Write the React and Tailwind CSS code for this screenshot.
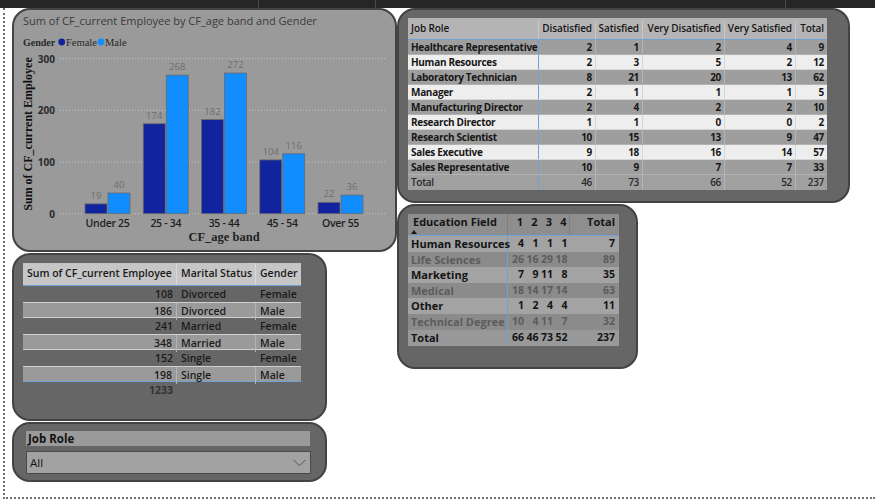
import React from "react";

const ageBands = [
  { label: "Under 25", f: 19, m: 40 },
  { label: "25 - 34", f: 174, m: 268 },
  { label: "35 - 44", f: 182, m: 272 },
  { label: "45 - 54", f: 104, m: 116 },
  { label: "Over 55", f: 22, m: 36 },
];

const jobRoles = [
  ["Healthcare Representative", 2, 1, 2, 4, 9],
  ["Human Resources", 2, 3, 5, 2, 12],
  ["Laboratory Technician", 8, 21, 20, 13, 62],
  ["Manager", 2, 1, 1, 1, 5],
  ["Manufacturing Director", 2, 4, 2, 2, 10],
  ["Research Director", 1, 1, 0, 0, 2],
  ["Research Scientist", 10, 15, 13, 9, 47],
  ["Sales Executive", 9, 18, 16, 14, 57],
  ["Sales Representative", 10, 9, 7, 7, 33],
];

const eduFields = [
  ["Human Resources", 4, 1, 1, 1, 7],
  ["Life Sciences", 26, 16, 29, 18, 89],
  ["Marketing", 7, 9, 11, 8, 35],
  ["Medical", 18, 14, 17, 14, 63],
  ["Other", 1, 2, 4, 4, 11],
  ["Technical Degree", 10, 4, 11, 7, 32],
];

const marital = [
  [108, "Divorced", "Female"],
  [186, "Divorced", "Male"],
  [241, "Married", "Female"],
  [348, "Married", "Male"],
  [152, "Single", "Female"],
  [198, "Single", "Male"],
];

const BASE = 181.7;
const SCALE = 0.517;

function AgeChart() {
  return (
    <div className="w-[385px] h-[244px] bg-[#9a9a9a] border-2 border-[#434343] rounded-[18px] overflow-hidden">
      <div className="h-[22px] pl-[9px] pt-[4px] text-[11px] leading-[14px] text-[#3a3a3a]">
        Sum of CF_current Employee by CF_age band and Gender
      </div>
      <svg width="381" height="218" className="block">
        {/* legend */}
        <text x="9" y="13.5" fontFamily="'Liberation Serif', serif" fontWeight="700" fontSize="10" fill="#2a2a2a">Gender</text>
        <circle cx="47.7" cy="10" r="3.4" fill="#12239e" />
        <text x="52" y="13.5" fontFamily="'Liberation Serif', serif" fontSize="10.5" fill="#2a2a2a">Female</text>
        <circle cx="87" cy="10" r="3.4" fill="#118dff" />
        <text x="91" y="13.5" fontFamily="'Liberation Serif', serif" fontSize="10.5" fill="#2a2a2a">Male</text>

        {/* y axis title */}
        <text
          x="15"
          y="102"
          transform="rotate(-90 15 102)"
          textAnchor="middle"
          dominantBaseline="middle"
          fontFamily="'Liberation Serif', serif"
          fontWeight="700"
          fontSize="12"
          fill="#111"
        >
          Sum of CF_current Employee
        </text>

        {/* grid + ticks */}
        {[0, 100, 200, 300].map((v) => {
          const y = BASE - v * SCALE;
          return (
            <g key={v}>
              <line x1="46" x2="372" y1={y} y2={y} stroke="#c4c4c4" strokeWidth="1" strokeDasharray="1 2" />
              <text x="41" y={y + 4} textAnchor="end" fontFamily="'Open Sans', sans-serif" fontWeight="700" fontSize="10" fill="#2a2a2a">{v}</text>
            </g>
          );
        })}

        {/* bars */}
        {ageBands.map((b, i) => {
          const x = 71 + i * 58.25;
          const hf = b.f * SCALE;
          const hm = b.m * SCALE;
          return (
            <g key={b.label}>
              <rect x={x} y={BASE - hf} width="22" height={hf} fill="#12239e" stroke="#6a6a6a" strokeWidth="0.8" />
              <rect x={x + 23} y={BASE - hm} width="22" height={hm} fill="#118dff" stroke="#6a6a6a" strokeWidth="0.8" />
              <text x={x + 11} y={BASE - hf - 5} textAnchor="middle" fontFamily="'Open Sans', sans-serif" fontSize="9.5" fill="#6e6e6e">{b.f}</text>
              <text x={x + 34} y={BASE - hm - 5} textAnchor="middle" fontFamily="'Open Sans', sans-serif" fontSize="9.5" fill="#6e6e6e">{b.m}</text>
              <text x={x + 22.5} y="194.5" textAnchor="middle" fontFamily="'Open Sans', sans-serif" fontWeight="600" fontSize="10.5" letterSpacing="-0.3" fill="#1e1e1e">{b.label}</text>
            </g>
          );
        })}

        <text x="210" y="209" textAnchor="middle" fontFamily="'Liberation Serif', serif" fontWeight="700" fontSize="12.5" fill="#222">CF_age band</text>
      </svg>
    </div>
  );
}

function MaritalTable() {
  return (
    <div className="mt-[1px] w-[315px] h-[168px] bg-[#666666] border-2 border-[#434343] rounded-[18px] pl-[9px] pt-[8px]">
      <div className="w-[278px] text-[10.5px] font-semibold text-[#1a1a1a]">
        <div className="grid grid-cols-[154px_79px_45px] h-[23px] bg-[#c6c6c6] border-b border-[#6fa3d8]">
          <div className="pl-[4px] pt-[3px] border-r border-[#d8d8d8]">Sum of CF_current Employee</div>
          <div className="pl-[4px] pt-[3px] border-r border-[#d8d8d8]">Marital Status</div>
          <div className="pl-[4px] pt-[3px]">Gender</div>
        </div>
        {marital.map((r, i) => (
          <div
            key={i}
            className={`grid grid-cols-[154px_79px_45px] h-[16px] leading-[17px] ${
              i % 2 === 1 ? "bg-[#9a9a9a] border-y border-[#cfcfcf]" : ""
            } ${i === marital.length - 1 ? "border-b-[#6fa3d8]" : ""}`}
          >
            <div className={`text-right pr-[4px] ${i % 2 === 1 ? "border-r border-[#b5b5b5]" : ""}`}>{r[0]}</div>
            <div className={`pl-[4px] ${i % 2 === 1 ? "border-r border-[#b5b5b5]" : ""}`}>{r[1]}</div>
            <div className="pl-[4px]">{r[2]}</div>
          </div>
        ))}
        <div className="grid grid-cols-[154px_79px_45px] h-[17px] leading-[17px] text-[#333]">
          <div className="text-right pr-[4px] font-bold">1233</div>
        </div>
      </div>
    </div>
  );
}

function Slicer() {
  return (
    <div className="mt-[1px] w-[315px] h-[60px] bg-[#666666] border-2 border-[#434343] rounded-[18px] pl-[12px] pt-[7px]">
      <div className="w-[284px] h-[15px] bg-[#9a9a9a] pl-[2px] text-[11.5px] leading-[15px] font-bold text-[#111]">Job Role</div>
      <div className="mt-[5px] w-[285px] h-[23px] bg-[#a2a2a2] border border-[#4a4a4a] flex items-center justify-between pl-[3px] pr-[4px]">
        <span className="text-[11.5px] text-[#141414]">All</span>
        <svg width="13" height="8" viewBox="0 0 13 8">
          <path d="M0.5 0.8 L6.5 6.8 L12.5 0.8" fill="none" stroke="#555" strokeWidth="1" />
        </svg>
      </div>
    </div>
  );
}

function JobRoleTable() {
  const cols = "grid grid-cols-[131px_57px_47px_82px_71px_31px]";
  return (
    <div className="w-[453px] h-[195px] bg-[#666666] border-2 border-[#434343] rounded-[18px] pl-[9px] pt-[8px]">
      <div className="w-[419px] text-[10px] font-bold tracking-[-0.3px] text-[#161616]">
        <div className={`${cols} h-[22px] bg-[#b4b4b4] border-b border-[#6fa3d8] pt-[3px] font-semibold tracking-[-0.1px]`}>
          <div className="pl-[3px] border-r border-[#c9c9c9]">Job Role</div>
          {["Disatisfied", "Satisfied", "Very Disatisfied", "Very Satisfied", "Total"].map((h, i) => (
            <div key={h} className={`text-right pr-[3px] ${i < 4 ? "border-r border-[#c9c9c9]" : ""}`}>{h}</div>
          ))}
        </div>
        {jobRoles.map((r, i) => (
          <div
            key={r[0]}
            className={`${cols} h-[15px] leading-[14px] border-b ${
              i % 2 === 0 ? "bg-[#9e9e9e] border-[#b2b2b2]" : "bg-[#eeeeee] border-[#d6d6d6]"
            }`}
          >
            <div className="pl-[3px] border-r border-[#6fa3d8] whitespace-nowrap">{r[0]}</div>
            {r.slice(1).map((v, j) => (
              <div
                key={j}
                className={`text-right pr-[3px] ${j < 4 ? (i % 2 === 0 ? "border-r border-[#b5b5b5]" : "border-r border-[#d6d6d6]") : ""}`}
              >
                {v}
              </div>
            ))}
          </div>
        ))}
        <div className={`${cols} h-[15px] leading-[14px] bg-[#a0a0a0] text-[#2a2a2a] font-semibold`}>
          <div className="pl-[3px] border-r border-[#6fa3d8]">Total</div>
          {[46, 73, 66, 52, 237].map((v, j) => (
            <div key={j} className={`text-right pr-[3px] ${j < 4 ? "border-r border-[#b5b5b5]" : ""}`}>{v}</div>
          ))}
        </div>
      </div>
    </div>
  );
}

function EducationTable() {
  const cols = "grid grid-cols-[100px_17px_14.5px_14.5px_14.5px_50.5px]";
  return (
    <div className="mt-[1px] w-[241px] h-[165px] bg-[#666666] border-2 border-[#434343] rounded-[18px] pl-[9px] pt-[8px]">
      <div className="w-[211px] text-[11px] font-bold text-[#161616]">
        <div className={`${cols} h-[22px] bg-[#8e8e8e] border-b border-[#6fa3d8]`}>
          <div className="relative pl-[5px] pt-[2px] border-r border-[#7f7f7f]">
            <div className="leading-[12px]">Education Field</div>
            {/* sort indicator */}
            <svg className="absolute left-[3px] top-[16px]" width="6" height="4" viewBox="0 0 6 4">
              <path d="M0 4 L3 0 L6 4 Z" fill="#161616" />
            </svg>
          </div>
          {["1", "2", "3", "4"].map((h) => (
            <div key={h} className="text-right pr-[2px] pt-[2px] leading-[12px]">{h}</div>
          ))}
          <div className="text-right pr-[4px] pt-[2px] leading-[12px] border-l border-[#7f7f7f]">Total</div>
        </div>
        {eduFields.map((r, i) => (
          <div
            key={r[0]}
            className={`${cols} h-[15.6px] leading-[15px] ${
              i % 2 === 0 ? "bg-[#a3a3a3] text-[#141414]" : "bg-[#8b8b8b] text-[#5c5c5c]"
            }`}
          >
            <div className="pl-[3px] border-r border-[#6fa3d8] whitespace-nowrap">{r[0]}</div>
            {r.slice(1).map((v, j) => (
              <div key={j} className={`text-right text-[10.5px] ${j < 4 ? "pr-[1px]" : "pr-[4px]"}`}>{v}</div>
            ))}
          </div>
        ))}
        <div className={`${cols} h-[16px] leading-[15px] bg-[#999999] text-[#141414]`}>
          <div className="pl-[3px] border-r border-[#6fa3d8]">Total</div>
          {[66, 46, 73, 52, 237].map((v, j) => (
            <div key={j} className={`text-right text-[10.5px] ${j < 4 ? "pr-[1px]" : "pr-[4px]"}`}>{v}</div>
          ))}
        </div>
      </div>
    </div>
  );
}

export default function App() {
  return (
    <div className="w-[875px] h-[502px] bg-white overflow-hidden font-['Open_Sans',sans-serif]">
      {/* top strip */}
      <div className="h-[8px] bg-[#262626] flex">
        <div className="w-[258px]" />
        <div className="w-px bg-[#4a4a4a]" />
        <div className="w-[116px]" />
        <div className="w-px bg-[#4a4a4a]" />
        <div className="w-[409px]" />
        <div className="w-px bg-[#4a4a4a]" />
      </div>
      <div className="ml-[3px] w-[872px] h-[491px] border-l-2 border-b-2 border-dotted border-[#6e6e6e] flex pl-[7px]">
        {/* left column */}
        <div className="flex flex-col">
          <AgeChart />
          <MaritalTable />
          <Slicer />
        </div>
        {/* right column */}
        <div className="flex flex-col">
          <JobRoleTable />
          <EducationTable />
        </div>
      </div>
    </div>
  );
}
